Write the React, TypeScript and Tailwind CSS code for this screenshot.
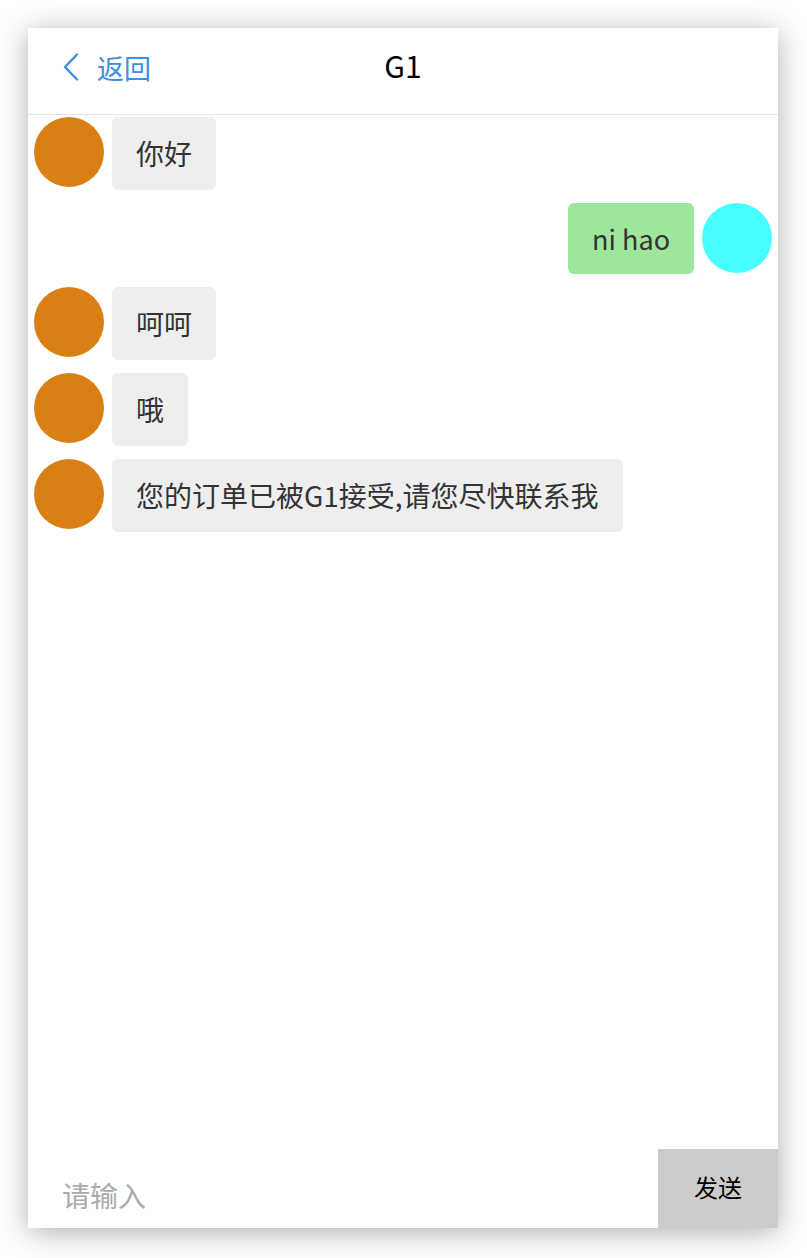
import React from 'react';

type Msg = { id: number; text: string; mine?: boolean };

const messages: Msg[] = [
  { id: 1, text: '你好' },
  { id: 2, text: 'ni hao', mine: true },
  { id: 3, text: '呵呵' },
  { id: 4, text: '哦' },
  { id: 5, text: '您的订单已被G1接受,请您尽快联系我' },
];

function Bubble({ msg }: { msg: Msg }) {
  if (msg.mine) {
    return (
      <div className="flex items-start justify-end gap-2 pr-[6px]">
        <div className="rounded-[6px] bg-[#9de69b] px-[24px] py-[15px] text-[27px] leading-[41px] text-[#333]">
          {msg.text}
        </div>
        <div className="h-[70px] w-[70px] shrink-0 rounded-full bg-[#48ffff]" />
      </div>
    );
  }
  return (
    <div className="flex items-start gap-2 pl-[6px]">
      <div className="h-[70px] w-[70px] shrink-0 rounded-full bg-[#d97f14]" />
      <div className="rounded-[6px] bg-[#eeeeee] px-[24px] py-[15px] text-[28px] leading-[43px] text-[#333]">
        {msg.text}
      </div>
    </div>
  );
}

export default function App() {
  return (
    <div className="min-h-screen bg-white p-[28px] pb-[30px] font-['Noto_Sans_CJK_SC',sans-serif]">
      <div className="flex h-[1200px] w-[750px] flex-col bg-white shadow-[0_4px_28px_rgba(0,0,0,0.32)]">
        {/* Header */}
        <div className="relative flex h-[87px] shrink-0 items-center border-b border-[#e3e3e3] px-[34px] pb-[8px]">
          <div className="flex items-center gap-[17px] text-[#3a8ee6]">
            <svg width="18" height="28" viewBox="0 0 18 28" fill="none">
              <path d="M15 1.5 L3 14 L15 26.5" stroke="#3a8ee6" strokeWidth="2.4" strokeLinecap="round" strokeLinejoin="round" />
            </svg>
            <span className="text-[27px] leading-none">返回</span>
          </div>
          <div className="absolute left-1/2 top-[22px] -translate-x-1/2 text-[30px] leading-none text-black">G1</div>
        </div>

        {/* Messages */}
        <div className="flex flex-1 flex-col gap-[13px] pt-[2px]">
          {messages.map((m) => (
            <Bubble key={m.id} msg={m} />
          ))}
        </div>

        {/* Input */}
        <div className="flex h-[79px] shrink-0 items-stretch">
          <div className="flex flex-1 items-end pb-[19px] pl-[34px] text-[28px] leading-none text-[#aaaaaa]">请输入</div>
          <button className="flex w-[120px] items-center justify-center bg-[#cccccc] pb-[4px] text-[24px] text-black">发送</button>
        </div>
      </div>
    </div>
  );
}
